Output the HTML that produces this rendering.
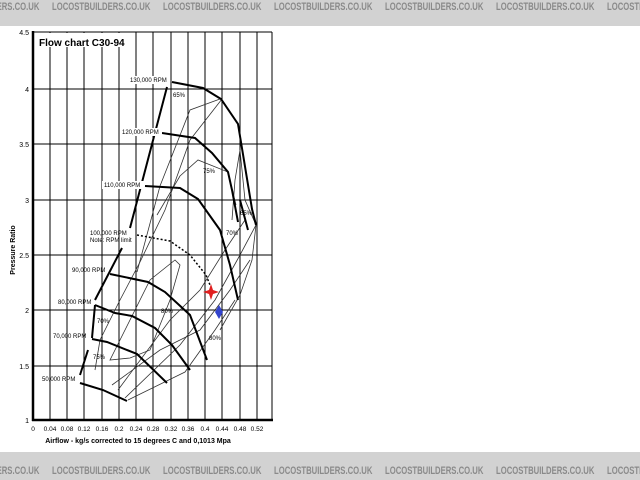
<!DOCTYPE html>
<html><head><meta charset="utf-8"><style>
html,body{margin:0;padding:0;width:640px;height:480px;overflow:hidden;background:#fff;font-family:"Liberation Sans",sans-serif}
.ban{position:absolute;left:0;width:640px;background:#d2d2d2;overflow:hidden}
.ban span{position:absolute;font-weight:bold;font-size:11px;color:#8a8a8a;white-space:nowrap;transform:scaleX(0.7);transform-origin:0 0}
</style></head><body>
<div class="ban" style="top:0;height:26px">
<span style="left:-59px;top:1px">LOCOSTBUILDERS.CO.UK</span>
<span style="left:52px;top:1px">LOCOSTBUILDERS.CO.UK</span>
<span style="left:163px;top:1px">LOCOSTBUILDERS.CO.UK</span>
<span style="left:274px;top:1px">LOCOSTBUILDERS.CO.UK</span>
<span style="left:385px;top:1px">LOCOSTBUILDERS.CO.UK</span>
<span style="left:496px;top:1px">LOCOSTBUILDERS.CO.UK</span>
<span style="left:607px;top:1px">LOCOSTBUILDERS.CO.UK</span>
</div>
<div class="ban" style="top:452px;height:28px">
<span style="left:-59px;top:13px">LOCOSTBUILDERS.CO.UK</span>
<span style="left:52px;top:13px">LOCOSTBUILDERS.CO.UK</span>
<span style="left:163px;top:13px">LOCOSTBUILDERS.CO.UK</span>
<span style="left:274px;top:13px">LOCOSTBUILDERS.CO.UK</span>
<span style="left:385px;top:13px">LOCOSTBUILDERS.CO.UK</span>
<span style="left:496px;top:13px">LOCOSTBUILDERS.CO.UK</span>
<span style="left:607px;top:13px">LOCOSTBUILDERS.CO.UK</span>
</div>
<svg width="640" height="480" style="position:absolute;left:0;top:0" font-family="Liberation Sans, sans-serif">
<g stroke="#000" stroke-width="1">
<line x1="50" y1="32" x2="50" y2="420"/><line x1="67" y1="32" x2="67" y2="420"/><line x1="84" y1="32" x2="84" y2="420"/>
<line x1="102" y1="32" x2="102" y2="420"/><line x1="119" y1="32" x2="119" y2="420"/><line x1="136" y1="32" x2="136" y2="420"/>
<line x1="153" y1="32" x2="153" y2="420"/><line x1="171" y1="32" x2="171" y2="420"/><line x1="188" y1="32" x2="188" y2="420"/>
<line x1="205" y1="32" x2="205" y2="420"/><line x1="222" y1="32" x2="222" y2="420"/><line x1="240" y1="32" x2="240" y2="420"/>
<line x1="257" y1="32" x2="257" y2="420"/>
<line x1="33" y1="89" x2="272" y2="89"/><line x1="33" y1="144" x2="272" y2="144"/><line x1="33" y1="200" x2="272" y2="200"/>
<line x1="33" y1="255" x2="272" y2="255"/><line x1="33" y1="310" x2="272" y2="310"/><line x1="33" y1="366" x2="272" y2="366"/>
<line x1="33" y1="32" x2="272" y2="32"/><line x1="272" y1="32" x2="272" y2="420"/>
</g>
<line x1="33" y1="31" x2="33" y2="421" stroke="#000" stroke-width="2.5"/>
<line x1="32" y1="420" x2="273" y2="420" stroke="#000" stroke-width="2.5"/>
<rect x="35" y="33" width="100" height="14" fill="#fff"/>
<text x="39" y="46" font-size="10" font-weight="bold">Flow chart C30-94</text>
<g font-size="7" text-anchor="end">
<text x="29" y="35">4.5</text><text x="29" y="92">4</text><text x="29" y="147">3.5</text><text x="29" y="203">3</text>
<text x="29" y="258">2.5</text><text x="29" y="313">2</text><text x="29" y="369">1.5</text><text x="29" y="423">1</text>
</g>
<g font-size="6.5" text-anchor="middle">
<text x="33" y="431">0</text><text x="50" y="431">0.04</text><text x="67" y="431">0.08</text><text x="84" y="431">0.12</text>
<text x="102" y="431">0.16</text><text x="119" y="431">0.2</text><text x="136" y="431">0.24</text><text x="153" y="431">0.28</text>
<text x="171" y="431">0.32</text><text x="188" y="431">0.36</text><text x="205" y="431">0.4</text><text x="222" y="431">0.44</text>
<text x="240" y="431">0.48</text><text x="257" y="431">0.52</text>
</g>
<text x="138" y="443" font-size="7" font-weight="bold" text-anchor="middle">Airflow - kg/s corrected to 15 degrees C and 0,1013 Mpa</text>
<text transform="translate(15,250) rotate(-90)" font-size="7" font-weight="bold" text-anchor="middle">Pressure Ratio</text>
<g fill="none" stroke="#333" stroke-width="0.8">
<path d="M137,272 L160,186 L190,110 L220,99"/>
<path d="M157,215 L180,176 L198,160 L228,172 L236,205"/>
<path d="M110,360 L150,280 L175,260 L180,265 L170,300 L150,350 L130,358 Z"/>
<path d="M118,390 L170,320 L200,290 L225,250 L245,220"/>
<path d="M125,398 L180,345 L215,300 L240,255 L256,225"/>
<path d="M112,385 L160,350 L200,330 L230,290 L250,260"/>
<path d="M128,400 L185,372 L215,330 L235,300"/>
<path d="M95,370 L100,340 L120,300 L140,262 L165,210 L190,140 L222,99"/>
<path d="M232,220 L235,180 L240,150 L245,200 L256,225 L252,260 L240,295 L220,330"/>
</g>
<g fill="none" stroke="#000" stroke-width="2">
<path d="M172,82 L203,88 L221,99 L238,124 L252,209 L256,225"/>
<path d="M162,133 L195,138 L212,153 L228,172 L232,190 L238,222"/>
<path d="M145,186 L180,188 L198,199 L220,230 L230,265 L238,300"/>
<path d="M110,274 L148,282 L165,292 L190,315 L207,360"/>
<path d="M95,305 L115,313 L132,316 L155,328 L172,345 L190,370"/>
<path d="M92,339 L107,342 L137,354 L167,383"/>
<path d="M80,383 L103,390 L127,401"/>
<path d="M80,375 L88,350"/><path d="M92,338 L95,305"/><path d="M95,300 L122,248"/><path d="M130,228 L167,87"/>
<path d="M240,200 L248,230"/>
</g>
<path d="M137,235 L170,241 L190,255 L206,275 L210,285" fill="none" stroke="#000" stroke-width="1.5" stroke-dasharray="2,2"/>
<g font-size="6" fill="#000">
<rect x="128" y="76" width="42" height="8" fill="#fff"/><text x="130" y="82">130,000 RPM</text>
<rect x="120" y="128" width="42" height="8" fill="#fff"/><text x="122" y="134">120,000 RPM</text>
<rect x="102" y="181" width="42" height="8" fill="#fff"/><text x="104" y="187">110,000 RPM</text>
<text x="90" y="235">100,000 RPM</text><text x="90" y="242">Note: RPM limit</text>
<text x="72" y="272">90,000 RPM</text>
<text x="58" y="304">80,000 RPM</text>
<text x="53" y="338">70,000 RPM</text>
<text x="42" y="381">50,000 RPM</text>
<text x="173" y="97">65%</text><text x="203" y="173">75%</text><text x="240" y="215">65%</text>
<text x="226" y="235">70%</text><text x="161" y="313">80%</text><text x="97" y="323">70%</text>
<text x="93" y="359">75%</text><text x="209" y="340">80%</text>
</g>
<path d="M211,284 L213,290 L219,292 L213,294 L211,300 L209,294 L203,292 L209,290 Z" fill="#e02020"/>
<path d="M219,305 L223,312 L219,319 L215,312 Z" fill="#3344cc"/>
</svg>
</body></html>
